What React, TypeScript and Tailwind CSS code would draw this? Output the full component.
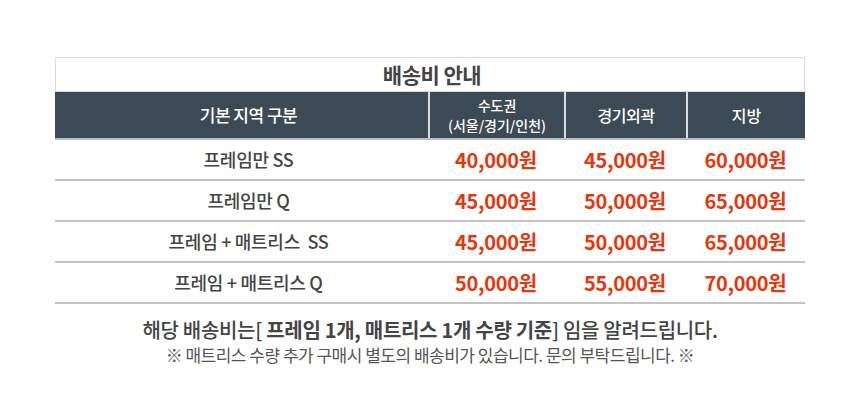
const rows = [
  { name: "프레임만 SS", prices: ["40,000원", "45,000원", "60,000원"] },
  { name: "프레임만 Q", prices: ["45,000원", "50,000원", "65,000원"] },
  { name: "프레임 + 매트리스  SS", prices: ["45,000원", "50,000원", "65,000원"] },
  { name: "프레임 + 매트리스 Q", prices: ["50,000원", "55,000원", "70,000원"] },
]

export default function App() {
  return (
    <div
      className="w-[860px] h-[405px] bg-white pt-[57px] text-[#444]"
      style={{ fontFamily: '"Noto Sans CJK KR", "Noto Sans", sans-serif' }}
    >
      <div className="mx-auto w-[750px]">
        <div className="h-[35px] border border-[#dcdcdc] flex items-center justify-center pl-[4px] text-[21px] font-bold text-[#444] tracking-[-0.5px]">
          배송비 안내
        </div>

        <div className="grid grid-cols-[373px_136px_122px_119px] h-[48px] bg-[#3c4a55] text-white font-medium border-b-2 border-[#b9bdc0]">
          <div className="flex items-center justify-center pl-[14px] text-[17px] tracking-[-0.5px]">기본 지역 구분</div>
          <div className="flex flex-col items-center justify-center text-[14px] leading-[20px] border-l-2 border-[#d9dde0]">
            <span>수도권</span>
            <span>(서울/경기/인천)</span>
          </div>
          <div className="flex items-center justify-center text-[16px] tracking-[-0.5px] border-l-2 border-[#d9dde0]">경기외곽</div>
          <div className="flex items-center justify-center text-[16px] border-l-2 border-[#d9dde0]">지방</div>
        </div>

        {rows.map((r) => (
          <div
            key={r.name}
            className="grid grid-cols-[373px_136px_122px_119px] h-[41px] border-b-2 border-[#c3c3c3]"
          >
            <div className="flex items-center justify-center pl-[14px] text-[18px] font-medium tracking-[-0.3px] whitespace-pre">{r.name}</div>
            {r.prices.map((p, i) => (
              <div key={i} className="flex items-center justify-center text-[20px] font-bold text-[#e5360e] tracking-[-0.3px]">
                {p}
              </div>
            ))}
          </div>
        ))}
      </div>

      <div className="mt-[12px] text-center text-[20px] leading-[28px] font-medium text-[#444] tracking-[-0.3px]">
        해당 배송비는[ <b>프레임 1개, 매트리스 1개 수량 기준</b>] 임을 알려드립니다.
      </div>
      <div className="text-center text-[17px] leading-[22px] text-[#555] tracking-[-0.5px]">
        ※ 매트리스 수량 추가 구매시 별도의 배송비가 있습니다. 문의 부탁드립니다. ※
      </div>
    </div>
  )
}
